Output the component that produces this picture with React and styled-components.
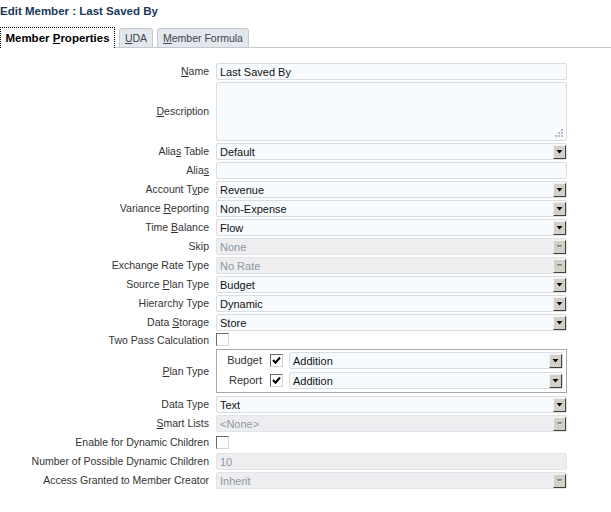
import React from "react";
import styled, { createGlobalStyle } from "styled-components";

const Global = createGlobalStyle`
  html, body { margin: 0; padding: 0; background: #fff; }
  body { font-family: "Liberation Sans", Arial, sans-serif; font-size: 10.5px; color: #333; }
`;

const Page = styled.div`
  width: 611px;
  height: 512px;
  overflow: hidden;
`;

const Title = styled.div`
  font-size: 11.5px;
  font-weight: bold;
  color: #17375c;
  line-height: 16px;
  padding: 3px 0 0 0;
  box-sizing: border-box;
  height: 24px;
`;

const TabBar = styled.div`
  display: flex;
  align-items: flex-end;
  height: 21px;
  margin-top: 2px;
  gap: 4px;
  border-bottom: 1px solid #c4cad1;
`;

const Tab = styled.div`
  height: ${p => (p.$active ? "21px" : "19px")};
  box-sizing: border-box;
  padding: 0 2px;
  display: flex;
  align-items: center;
  justify-content: center;
  white-space: nowrap;
  font-size: ${p => (p.$active ? "11.5px" : "10.5px")};
  font-weight: ${p => (p.$active ? "bold" : "normal")};
  color: ${p => (p.$active ? "#000" : "#3a4450")};
  background: ${p => (p.$active ? "#fff" : "#e4e7eb")};
  border: ${p => (p.$active ? "1px dotted #000" : "1px solid #c4cad1")};
  border-bottom: none;
  border-radius: ${p => (p.$active ? "0" : "3px 3px 0 0")};
  margin-bottom: ${p => (p.$active ? "-1px" : "0")};
  width: ${p => p.$w}px;
  flex: none;
`;

const Form = styled.div`
  display: grid;
  grid-template-columns: 209px 351px;
  column-gap: 7px;
  row-gap: 2px;
  margin-top: 15px;
  align-items: center;
`;

const Label = styled.div`
  text-align: right;
  white-space: nowrap;
  color: #333;
  line-height: 13px;
`;

const Field = styled.div`
  height: ${p => p.$h || 17}px;
  box-sizing: border-box;
  border: 1px solid ${p => (p.$disabled ? "#e2e4e7" : "#dadee3")};
  border-radius: 2px;
  background: ${p => (p.$disabled ? "#eeeef0" : "#f7fbfe")};
  color: ${p => (p.$disabled ? "#8d96a2" : "#111")};
  display: flex;
  align-items: center;
  position: relative;
  font-size: 11px;
`;

const FieldText = styled.span`
  flex: 1;
  padding-left: 3px;
  white-space: nowrap;
  overflow: hidden;
`;

const DropBtn = styled.div`
  width: 13px;
  height: 14px;
  box-sizing: border-box;
  background: #d4d0c8;
  border-top: 1px solid #f4f2ee;
  border-left: 1px solid #f4f2ee;
  border-right: 1px solid #404040;
  border-bottom: 1px solid #404040;
  display: flex;
  align-items: center;
  justify-content: center;
  flex: none;
`;

const Grip = styled.svg`
  position: absolute;
  right: 2px;
  bottom: 2px;
`;

const CheckCell = styled.div`
  height: ${p => p.$h}px;
  display: flex;
  align-items: ${p => p.$align || "center"};
`;

const Box = styled.span`
  width: 13px;
  height: 13px;
  box-sizing: border-box;
  border-top: 1px solid #6a6a6a;
  border-left: 1px solid #6a6a6a;
  border-right: 1px solid #d4d4d4;
  border-bottom: 1px solid #d4d4d4;
  background: #fff;
  display: inline-flex;
  align-items: center;
  justify-content: center;
  flex: none;
`;

const PlanBox = styled.div`
  height: 44px;
  box-sizing: border-box;
  border: 1px solid #a8a8a8;
  padding: 2px 3px 0 0;
  display: grid;
  grid-template-columns: 45px 13px 1fr;
  grid-template-rows: 17px 17px;
  column-gap: 8px;
  row-gap: 3px;
  align-items: center;
  margin-bottom: 1px;
`;

const PlanLabel = styled.div`
  text-align: right;
  color: #333;
  font-size: 11px;
  line-height: 13px;
`;

const PlanSelectWrap = styled.div`
  margin-left: -2px;
`;

const U = styled.span`
  text-decoration: underline;
`;

function Arrow({ disabled }) {
  return (
    <svg width="7" height="5" viewBox="0 0 7 5">
      <path d="M0.5 1h6L3.5 4.5z" fill={disabled ? "#8a8a8a" : "#000"} />
      {disabled && <path d="M3 3.5h1.5" stroke="#fff" strokeWidth="1" />}
    </svg>
  );
}

function Select({ value, disabled }) {
  return (
    <Field $disabled={disabled}>
      <FieldText>{value}</FieldText>
      <DropBtn>
        <Arrow disabled={disabled} />
      </DropBtn>
    </Field>
  );
}

function Text({ value, disabled }) {
  return (
    <Field $disabled={disabled}>
      <FieldText>{value}</FieldText>
    </Field>
  );
}

function Check({ checked }) {
  return (
    <Box>
      {checked && (
        <svg width="9" height="9" viewBox="0 0 9 9">
          <path d="M1 4l2.5 2.7L8 1.5" stroke="#000" strokeWidth="2" fill="none" />
        </svg>
      )}
    </Box>
  );
}

export default function App() {
  return (
    <Page>
      <Global />
      <Title>Edit Member : Last Saved By</Title>
      <TabBar>
        <Tab $active $w={115}>
          Member&nbsp;<U>P</U>roperties
        </Tab>
        <Tab $w={34}>
          <U>U</U>DA
        </Tab>
        <Tab $w={92}>
          <U>M</U>ember Formula
        </Tab>
      </TabBar>
      <Form>
        <Label><U>N</U>ame</Label>
        <Text value="Last Saved By" />

        <Label><U>D</U>escription</Label>
        <Field $h={59}>
          <Grip width="9" height="9" viewBox="0 0 9 9">
            <g fill="#b8bcc2">
              <rect x="6" y="0" width="2" height="2" />
              <rect x="3" y="3" width="2" height="2" />
              <rect x="6" y="3" width="2" height="2" />
              <rect x="0" y="6" width="2" height="2" />
              <rect x="3" y="6" width="2" height="2" />
              <rect x="6" y="6" width="2" height="2" />
            </g>
          </Grip>
        </Field>

        <Label>Alia<U>s</U> Table</Label>
        <Select value="Default" />

        <Label>Alia<U>s</U></Label>
        <Text value="" />

        <Label>Account T<U>y</U>pe</Label>
        <Select value="Revenue" />

        <Label>Variance <U>R</U>eporting</Label>
        <Select value="Non-Expense" />

        <Label>Time <U>B</U>alance</Label>
        <Select value="Flow" />

        <Label>Skip</Label>
        <Select value="None" disabled />

        <Label>Exchange Rate Type</Label>
        <Select value="No Rate" disabled />

        <Label>Source <U>P</U>lan Type</Label>
        <Select value="Budget" />

        <Label>Hierarchy Type</Label>
        <Select value="Dynamic" />

        <Label>Data <U>S</U>torage</Label>
        <Select value="Store" />

        <Label>Two Pass Calculation</Label>
        <CheckCell $h={14} $align="flex-start">
          <Check />
        </CheckCell>

        <Label><U>P</U>lan Type</Label>
        <PlanBox>
          <PlanLabel>Budget</PlanLabel>
          <Check checked />
          <PlanSelectWrap>
            <Select value="Addition" />
          </PlanSelectWrap>
          <PlanLabel>Report</PlanLabel>
          <Check checked />
          <PlanSelectWrap>
            <Select value="Addition" />
          </PlanSelectWrap>
        </PlanBox>

        <Label>Data Type</Label>
        <Select value="Text" />

        <Label><U>S</U>mart Lists</Label>
        <Select value="<None>" disabled />

        <Label>Enable for Dynamic Children</Label>
        <CheckCell $h={17}>
          <Check />
        </CheckCell>

        <Label>Number of Possible Dynamic Children</Label>
        <Text value="10" disabled />

        <Label>Access Granted to Member Creator</Label>
        <Select value="Inherit" disabled />
      </Form>
    </Page>
  );
}
